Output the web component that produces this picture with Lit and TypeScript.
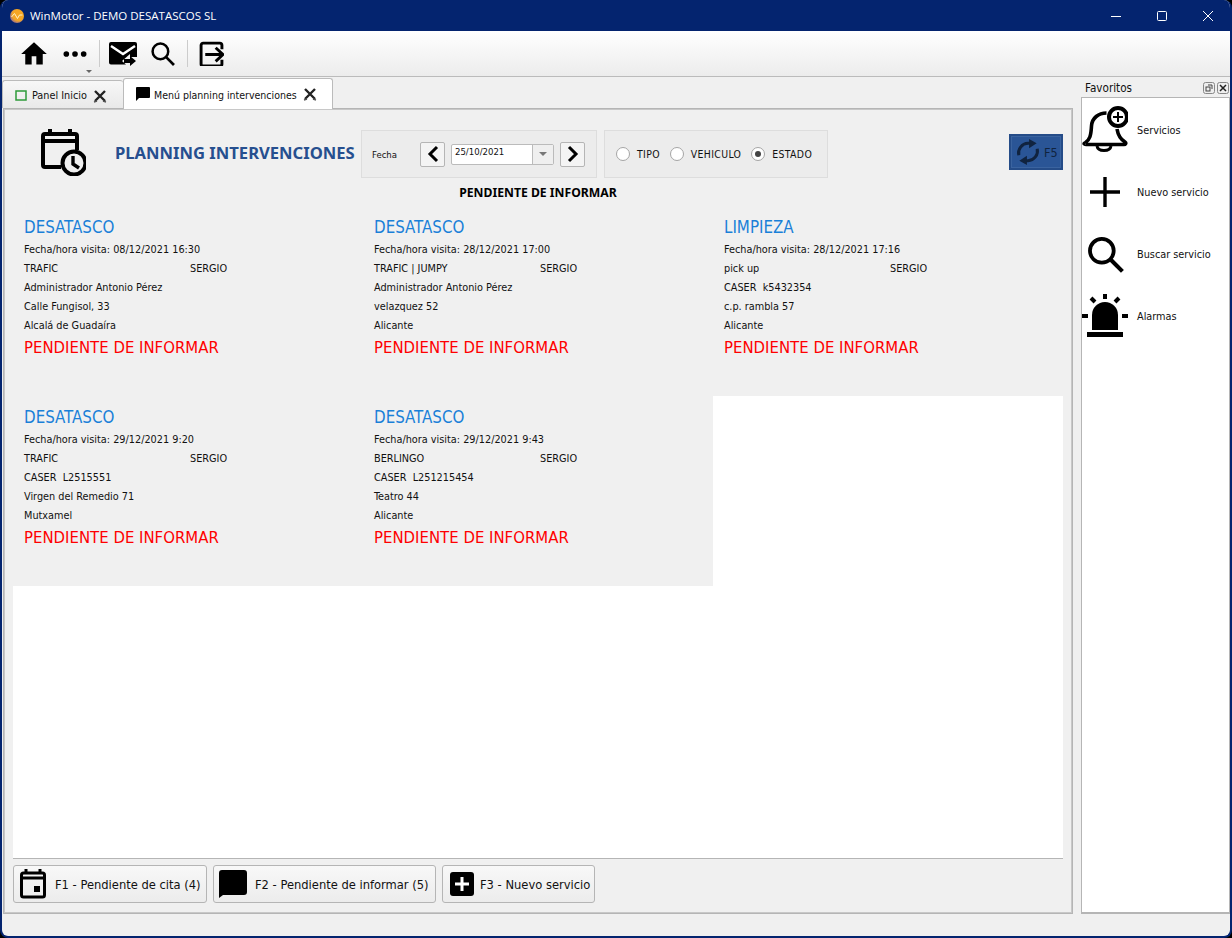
import { LitElement, html, css, svg } from 'lit';
import { customElement } from 'lit/decorators.js';

const cards = [
  { kind: 'DESATASCO', date: '08/12/2021 16:30', car: 'TRAFIC', who: 'SERGIO', client: 'Administrador Antonio Pérez', addr: 'Calle Fungisol, 33', city: 'Alcalá de Guadaíra' },
  { kind: 'DESATASCO', date: '28/12/2021 17:00', car: 'TRAFIC | JUMPY', who: 'SERGIO', client: 'Administrador Antonio Pérez', addr: 'velazquez 52', city: 'Alicante' },
  { kind: 'LIMPIEZA', date: '28/12/2021 17:16', car: 'pick up', who: 'SERGIO', client: 'CASER  k5432354', addr: 'c.p. rambla 57', city: 'Alicante' },
  { kind: 'DESATASCO', date: '29/12/2021 9:20', car: 'TRAFIC', who: 'SERGIO', client: 'CASER  L2515551', addr: 'Virgen del Remedio 71', city: 'Mutxamel' },
  { kind: 'DESATASCO', date: '29/12/2021 9:43', car: 'BERLINGO', who: 'SERGIO', client: 'CASER  L251215454', addr: 'Teatro 44', city: 'Alicante' },
];

const icon = (w: number, h: number, body: unknown, vb = '0 0 24 24') =>
  html`<svg width=${w} height=${h} viewBox=${vb}>${body}</svg>`;

const searchIcon = svg`<circle cx="10" cy="10" r="7.500" fill="none" stroke="#000" stroke-width="2.400"/><path d="M15.500 15.500l7.500 7.500" stroke="#000" stroke-width="2.600"/>`;
const homeIcon = svg`<path d="M10 21v-7h4v7h5.500v-9H23L12 2 1 12h3.500v9z"/>`;
const dotsIcon = svg`<circle cx="4" cy="12" r="2.600"/><circle cx="12" cy="12" r="2.600"/><circle cx="20" cy="12" r="2.600"/>`;
const mailIcon = svg`<path d="M2 1h24a2 2 0 0 1 2 2v13h-7v-3l-8 7 4 3.500H2a2 2 0 0 1-2-2V3a2 2 0 0 1 2-2z"/><path d="M2 5l12 8 12-8" fill="none" stroke="#fff" stroke-width="2.400"/><path d="M21 15l6 5-6 5v-3h-6v-4h6z"/>`;
const exitIcon = svg`<path d="M22 8V4a2 2 0 0 0-2-2H4a2 2 0 0 0-2 2v18a2 2 0 0 0 2 2h16a2 2 0 0 0 2-2v-4" fill="none" stroke="#000" stroke-width="2.800"/><path d="M6 13h16M16 6.500l7 6.500-7 6.500" fill="none" stroke="#000" stroke-width="2.800"/>`;
const calClock = svg`<path d="M9 0v7M29 0v7" stroke="#000" stroke-width="4"/><path d="M20 38H4a2 2 0 0 1-2-2V7a2 2 0 0 1 2-2h30a2 2 0 0 1 2 2v14" fill="none" stroke="#000" stroke-width="4"/><path d="M2 12h34" stroke="#000" stroke-width="4"/><circle cx="33" cy="34" r="11.500" fill="#f0f0f0" stroke="#000" stroke-width="4"/><path d="M32 27v8l6 4" fill="none" stroke="#000" stroke-width="3.400"/>`;
const bellIcon = svg`<path d="M3 37c5-3 6-8 6.500-17 .5-8 7-13 15-13M35 23c1 6 3 10 8 13 1.500 1 .5 2.500-1 2.500H4c-2 0-2.500-1-1-1.500" fill="none" stroke="#000" stroke-width="3.600"/><path d="M15 40c1 6 13 6 14 0" fill="none" stroke="#000" stroke-width="3"/><circle cx="36" cy="11" r="9" fill="#fff" stroke="#000" stroke-width="4"/><path d="M36 6v10M31 11h10" stroke="#000" stroke-width="2"/>`;
const sirenIcon = svg`<path d="M10 36V21a13 13 0 0 1 26 0v15z"/><rect x="5" y="38" width="36" height="5"/><path d="M23 0v5M9 4l4 4M37 4l-4 4M0 22h6M40 22h6" stroke="#000" stroke-width="4"/>`;
const refreshIcon = svg`<path d="M3.500 15A9 9 0 0 1 12 4h3M20.500 9A9 9 0 0 1 12 20H9" fill="none" stroke="#10233f" stroke-width="2.800"/><path d="M13 0l7 4-7 4.500zM11 24l-7-4 7-4.500z" fill="#10233f"/>`;

@customElement('app-root')
export class AppRoot extends LitElement {
  static styles = css`
    :host {
      display: block;
      width: 1232px;
      height: 938px;
      background: #000;
      font-family: 'DejaVu Sans Condensed', 'DejaVu Sans', sans-serif;
      font-stretch: condensed;
      font-size: 10.8px;
      color: #111;
    }
    svg { display: block; flex: none; }
    .window {
      height: 938px;
      box-sizing: border-box;
      display: flex;
      flex-direction: column;
      background: #f0f0f0;
      border: solid #04246f;
      border-width: 0 2px 2px 2px;
      border-radius: 8px;
      overflow: hidden;
    }
    .titlebar {
      height: 31px;
      flex: none;
      margin: 0 -2px;
      background: #04246f;
      color: #fff;
      display: flex;
      align-items: center;
      padding-left: 10px;
      font: 11.5px 'Open Sans', sans-serif;
    }
    .logo { margin-right: 6px; }
    .winbtns { margin-left: auto; display: flex; margin-right: 1px; }
    .winbtns svg { margin: 0 18px; }
    .toolbar {
      height: 46px;
      flex: none;
      box-sizing: border-box;
      border-bottom: 1px solid #bbb;
      background: linear-gradient(#fff, #ececec);
      display: flex;
      align-items: center;
      padding-left: 6px;
    }
    .grip {
      width: 5px;
      height: 26px;
      margin-right: 7px;
      background-image: radial-gradient(#bbb 40%, transparent 45%);
      background-size: 2px 2px;
    }
    .tool { position: relative; margin-right: 14px; }
    .tool.more { margin-right: 11px; }
    .tool.mail { margin-right: 13px; }
    .tool.find { margin-right: 12px; }
    .caret {
      position: absolute;
      right: -4px;
      bottom: -9px;
      border: 3px solid transparent;
      border-top: 3px solid #666;
    }
    .sep { width: 1px; height: 27px; background: #ccc; margin-right: 9px; }
    .sep.wide { margin-right: 11px; }
    .work { flex: 1; min-height: 0; display: flex; }
    .left { width: 1071px; flex: none; display: flex; flex-direction: column; }
    .tabs { height: 31px; flex: none; display: flex; align-items: flex-end; position: relative; }
    .tab {
      box-sizing: border-box;
      display: flex;
      align-items: center;
      border: 1px solid #bbb;
      border-bottom: none;
      border-radius: 3px 3px 0 0;
    }
    .tab.off {
      width: 121px;
      height: 28px;
      padding: 2px 0 0 12px;
      background: linear-gradient(#f7f7f7, #e9e9e9);
      border-right: none;
    }
    .tab.on {
      width: 210px;
      height: 31px;
      padding: 0 0 1px 12px;
      background: #fff;
      position: relative;
      top: 1px;
    }
    .tab span { margin: 0 6px 0 5px; white-space: nowrap; }
    .tab.on span { font-size: 10.5px; margin-top: 2px; margin-left: 4px; }
    .tab.off svg:last-child { margin-left: auto; margin-right: 16px; }
    .tab.on svg:last-child { margin-left: auto; margin-right: 15px; }
    .panel {
      flex: 1;
      min-height: 0;
      margin-left: 1px;
      box-sizing: border-box;
      border: 1px solid #b5b5b5;
      outline: 1px solid #c8c8c8;
      outline-offset: -2px;
      padding: 0 9px;
      display: flex;
      flex-direction: column;
    }
    .head { height: 97px; flex: none; position: relative; }
    .headrow { display: flex; align-items: flex-start; padding-top: 21px; }
    .calicon { margin: -2px 29px 0 28px; }
    .h1 {
      width: 246px;
      flex: none;
      margin-top: 11px;
      font: bold 16.6px 'Noto Sans', sans-serif;
      color: #264f8f;
      white-space: nowrap;
    }
    .box {
      box-sizing: border-box;
      height: 48px;
      background: #ececec;
      border: 1px solid #ddd;
      display: flex;
      align-items: center;
      font-size: 9.5px;
    }
    .fecha { width: 236px; padding-left: 10px; margin-right: 7px; }
    .fecha .lbl { width: 48px; }
    .nav {
      width: 25px;
      height: 25px;
      box-sizing: border-box;
      border: 1px solid #b5b5b5;
      border-radius: 2px;
      background: #f4f4f4;
      display: flex;
      align-items: center;
      justify-content: center;
    }
    .date {
      width: 103px;
      height: 21px;
      box-sizing: border-box;
      margin: 0 6px;
      border: 1px solid #bbb;
      border-radius: 2px;
      background: #fff;
      display: flex;
      font-size: 9.5px;
    }
    .date span { flex: 1; padding: 1px 0 0 3px; }
    .date i {
      width: 20px;
      border-left: 1px solid #bbb;
      background: #efefef;
      display: flex;
      align-items: center;
      justify-content: center;
    }
    .date i::before {
      content: '';
      border: 4px solid transparent;
      border-top: 4px solid #777;
      margin-top: 4px;
    }
    .radios { width: 224px; padding-left: 10px; font-size: 10.4px; letter-spacing: .35px; }
    .radio {
      width: 14px;
      height: 14px;
      box-sizing: border-box;
      border: 1px solid #a5a5a5;
      border-radius: 50%;
      background: #fff;
      margin: 0 7px 0 1px;
      display: flex;
      align-items: center;
      justify-content: center;
    }
    .radio.sel::before { content: ''; width: 6px; height: 6px; border-radius: 50%; background: #444; }
    .radios span { margin-right: 9px; }
    .f5 {
      margin-left: auto;
      margin-top: 4px;
      width: 54px;
      height: 36px;
      box-sizing: border-box;
      background: #2a5596;
      border: 2px solid #254c88;
      outline: 1px solid #3a639f;
      outline-offset: -3px;
      display: flex;
      align-items: center;
      padding-left: 4px;
      font-size: 12.5px;
      color: #10233f;
      gap: 3px;
    }
    .sub {
      position: absolute;
      left: 0;
      right: 0;
      top: 75px;
      text-align: center;
      font: bold 12.2px 'Noto Sans', sans-serif;
      color: #000;
    }
    .list {
      flex: 1;
      min-height: 0;
      background: #fff;
      border-bottom: 1px solid #b5b5b5;
      display: grid;
      grid-template-columns: repeat(3, 350px);
      grid-auto-rows: 190px;
      align-content: start;
    }
    .card { background: #f0f0f0; padding: 11px 0 0 11px; color: #111; }
    .kind { font-size: 16.8px; line-height: 20px; color: #1a80d8; margin-bottom: 3px; }
    .line { height: 19px; line-height: 19px; white-space: pre; display: grid; grid-template-columns: 166px auto; }
    .state { font-size: 16.6px; line-height: 22px; color: #f00; margin-top: 2px; white-space: nowrap; }
    .foot { height: 54px; flex: none; box-sizing: border-box; padding-top: 6px; display: flex; gap: 6px; }
    .btn {
      height: 38px;
      box-sizing: border-box;
      border: 1px solid #b5b5b5;
      border-radius: 3px;
      background: linear-gradient(#f8f8f8, #ececec);
      display: flex;
      align-items: center;
      font-size: 12.8px;
      white-space: nowrap;
    }
    .btn.b1 { width: 194px; padding-left: 6px; gap: 9px; }
    .btn.b2 { width: 223px; padding-left: 5px; gap: 8px; }
    .btn.b3 { width: 153px; padding-left: 7px; gap: 6px; }
    .splitter { width: 8px; flex: none; }
    .dock { width: 149px; flex: none; display: flex; flex-direction: column; }
    .dockhead {
      height: 20px;
      flex: none;
      display: flex;
      align-items: center;
      padding: 2px 0 0 4px;
      box-sizing: border-box;
      font-size: 11.6px;
    }
    .dockbtns { margin-left: auto; display: flex; gap: 2px; margin-right: 1px; }
    .favs {
      flex: 1;
      box-sizing: border-box;
      background: #fff;
      border: 1px solid #b5b5b5;
      border-bottom-width: 2px;
      padding-top: 1px;
    }
    .fav { height: 62px; display: flex; align-items: center; }
    .fav .ic { width: 46px; margin-right: 9px; display: flex; justify-content: center; flex: none; }
    .status { height: 22px; flex: none; }
  `;

  renderCard(c: (typeof cards)[number]) {
    return html`<div class="card">
      <div class="kind">${c.kind}</div>
      <div class="line">Fecha/hora visita: ${c.date}</div>
      <div class="line"><span>${c.car}</span><span>${c.who}</span></div>
      <div class="line">${c.client}</div>
      <div class="line">${c.addr}</div>
      <div class="line">${c.city}</div>
      <div class="state">PENDIENTE DE INFORMAR</div>
    </div>`;
  }

  render() {
    const closeX = icon(14, 14, svg`<path d="M2 2l10 10M12 2L2 12" stroke="#222" stroke-width="2.400"/><path d="M1 13l3-1M13 13l-3-1" stroke="#555" stroke-width="1.500"/>`, '0 0 14 14');
    const dockBtn = (inner: unknown) => icon(12, 12, svg`<rect x=".5" y=".5" width="11" height="11" rx="2" fill="#eee" stroke="#888"/>${inner}`, '0 0 12 12');
    return html`<div class="window">
      <div class="titlebar">
        <div class="logo">${icon(14, 14, svg`<defs><radialGradient id="lg" cx=".6" cy=".4" r=".7"><stop offset=".6" stop-color="#f5a623"/><stop offset="1" stop-color="#7d5fa8"/></radialGradient></defs><circle cx="7" cy="7" r="7" fill="url(#lg)"/><path d="M1.500 8l3-3.500 3 5 2-3.500h3" fill="none" stroke="#fff2c8" stroke-width="1"/>`, '0 0 14 14')}</div>
        WinMotor - DEMO DESATASCOS SL
        <div class="winbtns">
          ${icon(10, 10, svg`<path d="M0 5.500h10" stroke="#fff"/>`, '0 0 10 10')}
          ${icon(10, 10, svg`<rect x=".5" y=".5" width="9" height="9" rx="1" fill="none" stroke="#fff"/>`, '0 0 10 10')}
          ${icon(10, 10, svg`<path d="M0 0l10 10M10 0L0 10" stroke="#fff"/>`, '0 0 10 10')}
        </div>
      </div>
      <div class="toolbar">
        <div class="grip"></div>
        <div class="tool">${icon(28, 28, homeIcon)}</div>
        <div class="tool more">${icon(26, 26, dotsIcon)}<div class="caret"></div></div>
        <div class="sep"></div>
        <div class="tool mail">${icon(28, 26, mailIcon, '0 0 28 26')}</div>
        <div class="tool find">${icon(25, 25, searchIcon)}</div>
        <div class="sep wide"></div>
        <div class="tool">${icon(25, 25, exitIcon)}</div>
      </div>
      <div class="work">
        <div class="left">
          <div class="tabs">
            <div class="tab off">
              ${icon(12, 11, svg`<rect x="1" y="1" width="10" height="9" fill="none" stroke="#2e9a3a" stroke-width="1.500"/>`, '0 0 12 11')}
              <span>Panel Inicio</span>${closeX}
            </div>
            <div class="tab on">
              ${icon(14, 14, svg`<path d="M1 0h12a1 1 0 0 1 1 1v9a1 1 0 0 1-1 1H3l-3 3V1a1 1 0 0 1 1-1z"/>`, '0 0 14 14')}
              <span>Menú planning intervenciones</span>${closeX}
            </div>
          </div>
          <div class="panel">
            <div class="head">
              <div class="headrow">
                <div class="calicon">${icon(45, 48, calClock, '0 0 45 46')}</div>
                <div class="h1">PLANNING INTERVENCIONES</div>
                <div class="box fecha">
                  <div class="lbl">Fecha</div>
                  <div class="nav">${icon(14, 18, svg`<path d="M11 2L4 9l7 7" fill="none" stroke="#000" stroke-width="3"/>`, '0 0 14 18')}</div>
                  <div class="date"><span>25/10/2021</span><i></i></div>
                  <div class="nav">${icon(14, 18, svg`<path d="M3 2l7 7-7 7" fill="none" stroke="#000" stroke-width="3"/>`, '0 0 14 18')}</div>
                </div>
                <div class="box radios">
                  <div class="radio"></div><span>TIPO</span>
                  <div class="radio"></div><span>VEHICULO</span>
                  <div class="radio sel"></div><span>ESTADO</span>
                </div>
                <div class="f5">${icon(26, 28, refreshIcon)}F5</div>
              </div>
              <div class="sub">PENDIENTE DE INFORMAR</div>
            </div>
            <div class="list">${cards.map((c) => this.renderCard(c))}</div>
            <div class="foot">
              <div class="btn b1">
                ${icon(26, 30, svg`<path d="M6 0v5M20 0v5" stroke="#000" stroke-width="3"/><rect x="1.500" y="4" width="23" height="24" rx="2" fill="none" stroke="#000" stroke-width="3"/><path d="M2 9h22" stroke="#000" stroke-width="3"/><rect x="14" y="17" width="6" height="6"/>`, '0 0 26 30')}
                F1 - Pendiente de cita (4)
              </div>
              <div class="btn b2">
                ${icon(28, 28, svg`<path d="M3 0h22a3 3 0 0 1 3 3v19a3 3 0 0 1-3 3H4l-4 3V3a3 3 0 0 1 3-3z"/>`, '0 0 28 28')}
                F2 - Pendiente de informar (5)
              </div>
              <div class="btn b3">
                ${icon(24, 24, svg`<rect width="24" height="24" rx="3"/><path d="M12 5v14M5 12h14" stroke="#fff" stroke-width="3"/>`)}
                F3 - Nuevo servicio
              </div>
            </div>
          </div>
        </div>
        <div class="splitter"></div>
        <div class="dock">
          <div class="dockhead">Favoritos
            <div class="dockbtns">
              ${dockBtn(svg`<rect x="3" y="5" width="4" height="4" fill="none" stroke="#444"/><path d="M5 3h4v4" fill="none" stroke="#444"/>`)}
              ${dockBtn(svg`<path d="M3 3l6 6M9 3L3 9" stroke="#222" stroke-width="1.500"/>`)}
            </div>
          </div>
          <div class="favs">
            <div class="fav"><div class="ic">${icon(46, 50, bellIcon, '0 0 46 48')}</div>Servicios</div>
            <div class="fav"><div class="ic">${icon(32, 32, svg`<path d="M16 1v30M1 16h30" stroke="#000" stroke-width="3.400"/>`, '0 0 32 32')}</div>Nuevo servicio</div>
            <div class="fav"><div class="ic">${icon(38, 38, searchIcon)}</div>Buscar servicio</div>
            <div class="fav"><div class="ic">${icon(46, 48, sirenIcon, '0 0 46 44')}</div>Alarmas</div>
          </div>
        </div>
      </div>
      <div class="status"></div>
    </div>`;
  }
}
